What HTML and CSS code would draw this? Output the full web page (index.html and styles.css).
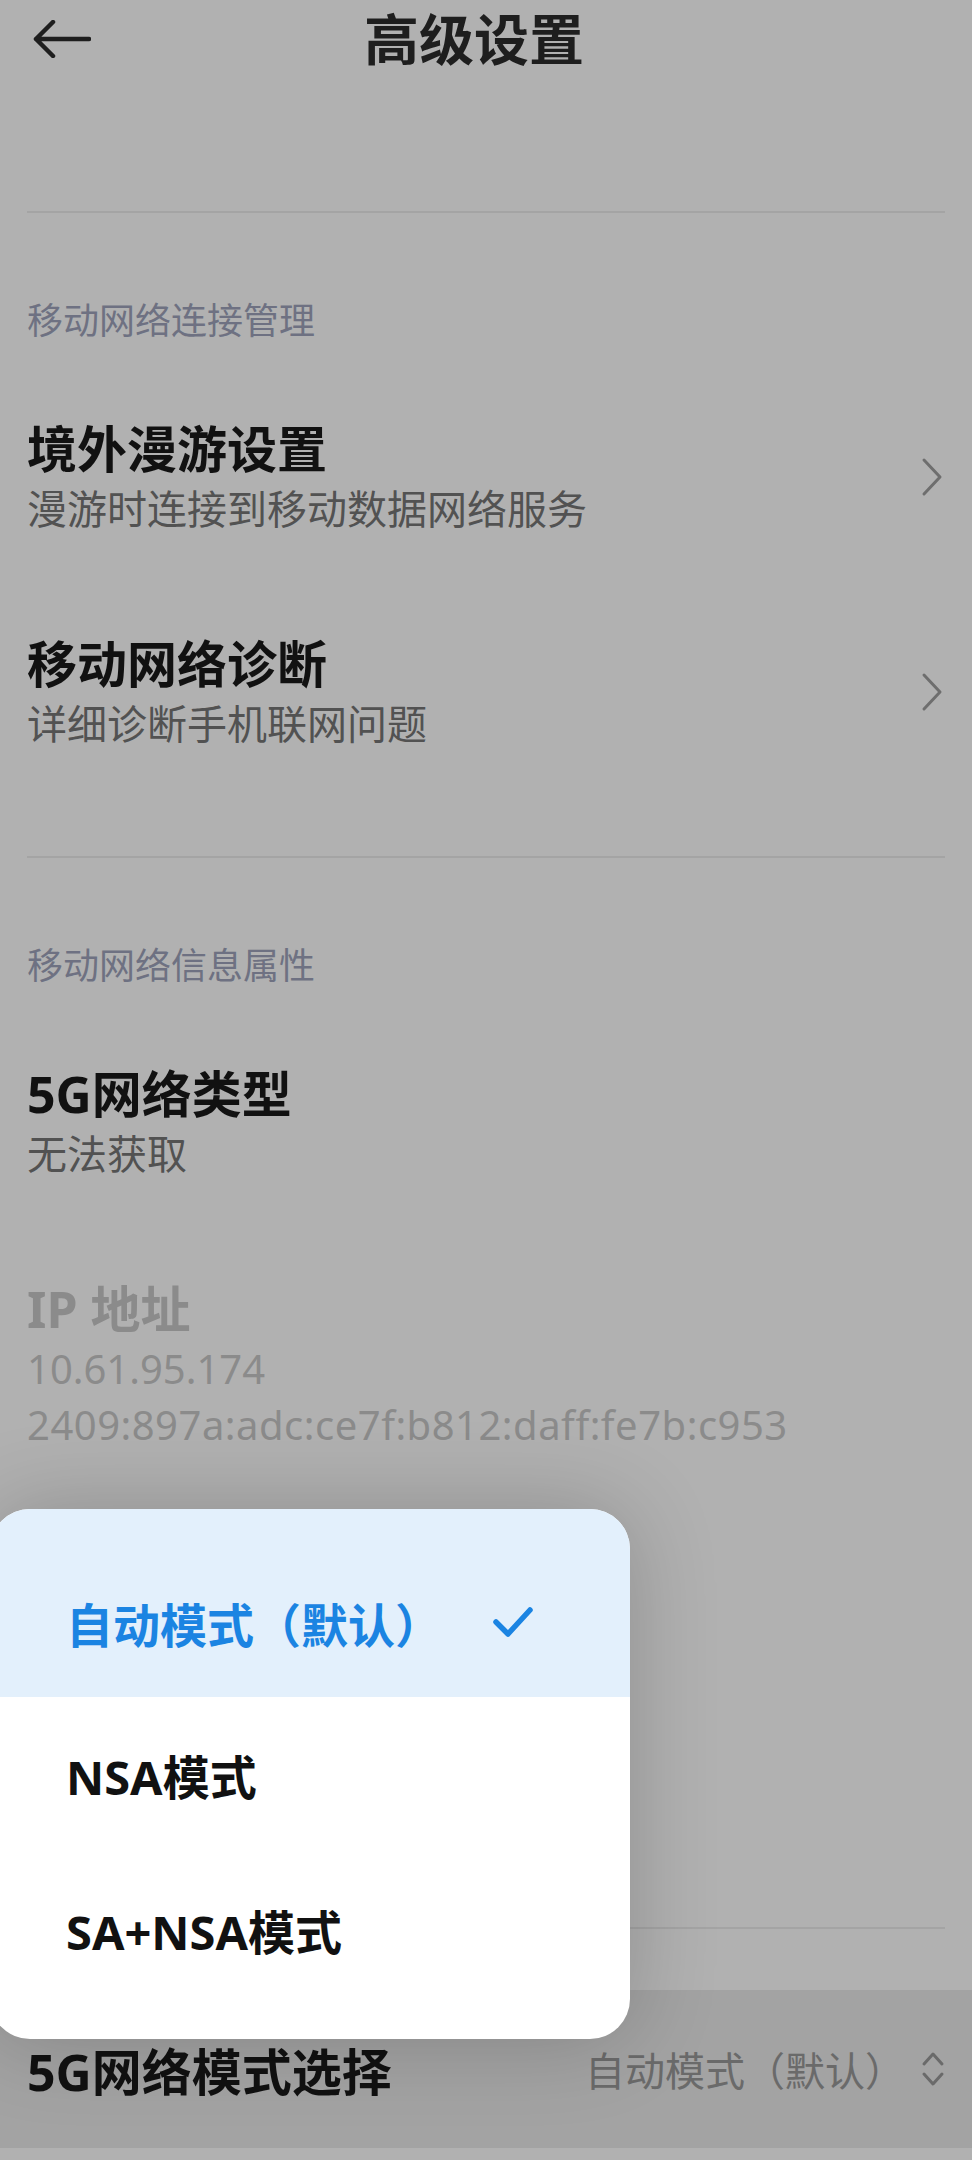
FILE: index.html
```html
<!DOCTYPE html>
<html lang="zh-CN">
<head>
    <meta charset="UTF-8">
    <meta name="viewport" content="width=device-width, initial-scale=1.0">
    <title>高级设置</title>
    <link rel="stylesheet" href="styles.css">
</head>
<body>
    <div class="page">
        <header class="title-bar">
            <button class="back-btn" aria-label="返回">
                <svg width="58" height="38" viewBox="0 0 58 38">
                    <path d="M20 2 L3 19 L20 36 M3 19 H56" fill="none" stroke="#1e1e1e" stroke-width="4.5" stroke-linecap="round" stroke-linejoin="round"/>
                </svg>
            </button>
            <h1 class="title">高级设置</h1>
            <div class="title-spacer"></div>
        </header>

        <div class="divider divider-top"></div>

        <section class="group">
            <div class="group-label">移动网络连接管理</div>
            <div class="item">
                <div class="item-text">
                    <div class="item-title">境外漫游设置</div>
                    <div class="item-sub">漫游时连接到移动数据网络服务</div>
                </div>
                <svg class="chevron" width="22" height="40" viewBox="0 0 22 40">
                    <path d="M3 3 L19 20 L3 37" fill="none" stroke="#6e6e6e" stroke-width="3" stroke-linecap="round" stroke-linejoin="round"/>
                </svg>
            </div>
            <div class="item">
                <div class="item-text">
                    <div class="item-title">移动网络诊断</div>
                    <div class="item-sub">详细诊断手机联网问题</div>
                </div>
                <svg class="chevron" width="22" height="40" viewBox="0 0 22 40">
                    <path d="M3 3 L19 20 L3 37" fill="none" stroke="#6e6e6e" stroke-width="3" stroke-linecap="round" stroke-linejoin="round"/>
                </svg>
            </div>
        </section>

        <div class="divider divider-mid"></div>

        <section class="group">
            <div class="group-label">移动网络信息属性</div>
            <div class="item">
                <div class="item-text">
                    <div class="item-title">5G网络类型</div>
                    <div class="item-sub">无法获取</div>
                </div>
            </div>
            <div class="item disabled">
                <div class="item-text">
                    <div class="item-title">IP 地址</div>
                    <div class="item-sub">10.61.95.174</div>
                    <div class="item-sub ip-v6">2409:897a:adc:ce7f:b812:daff:fe7b:c953</div>
                </div>
            </div>
        </section>

        <div class="divider divider-low"></div>

        <div class="select-row">
            <div class="select-title">5G网络模式选择</div>
            <div class="select-value">自动模式（默认）</div>
            <svg class="updown" width="24" height="38" viewBox="0 0 24 38">
                <path d="M3 14 L12 4 L21 14 M3 24 L12 34 L21 24" fill="none" stroke="#6a6a6a" stroke-width="3" stroke-linecap="round" stroke-linejoin="round"/>
            </svg>
        </div>

        <!-- 下拉选择弹层 -->
        <div class="popup">
            <div class="menu-item selected">
                <span>自动模式（默认）</span>
                <svg class="check" width="42" height="32" viewBox="0 0 42 32">
                    <path d="M4 16 L16 28 L38 4" fill="none" stroke="#1b84e2" stroke-width="5.5" stroke-linecap="round" stroke-linejoin="round"/>
                </svg>
            </div>
            <div class="menu-item">NSA模式</div>
            <div class="menu-item">SA+NSA模式</div>
        </div>
    </div>
</body>
</html>
```

FILE: styles.css
```css
* {
    margin: 0;
    padding: 0;
    box-sizing: border-box;
}

body {
    font-family: "Noto Sans", "Noto Sans CJK SC", sans-serif;
    background: #b1b1b1;
    width: 972px;
    height: 2160px;
    overflow: hidden;
}

.page {
    position: relative;
    width: 100%;
    height: 100%;
}

/* 标题栏 */
.title-bar {
    height: 78px;
    display: flex;
    align-items: center;
}

.back-btn {
    margin-left: 33px;
    width: 58px;
    height: 38px;
    border: none;
    background: none;
    display: flex;
}

.title {
    flex: 1;
    text-align: center;
    font-size: 55px;
    font-weight: 700;
    color: #1e1e1e;
    line-height: 78px;
}

.title-spacer {
    width: 115px;
}

/* 分割线 */
.divider {
    height: 2px;
    margin: 0 27px;
    background: #a4a4a4;
}

.divider-top {
    margin-top: 133px;
}

.divider-mid {
    margin-top: 56px;
}

.divider-low {
    margin-top: 426px;
}

/* 分组 */
.group {
    padding: 0 27px;
}

.group-label {
    padding-top: 84px;
    margin-bottom: 25px;
    font-size: 36px;
    line-height: 48px;
    color: #6e7182;
}

.item {
    display: flex;
    align-items: center;
    padding: 47px 0 48px;
}

.item-text {
    flex: 1;
}

.item-title {
    font-size: 50px;
    font-weight: 700;
    line-height: 64px;
    color: #111111;
}

.item-sub {
    font-size: 40px;
    line-height: 56px;
    color: #525252;
}

.item-sub.ip-v6 {
    letter-spacing: 0.5px;
}

.item.disabled .item-title,
.item.disabled .item-sub {
    color: #8b8b8b;
}

.chevron {
    margin-right: 2px;
}

/* 底部选择行（按下状态） */
.select-row {
    margin-top: 61px;
    height: 158px;
    display: flex;
    align-items: center;
    padding: 0 27px;
    background: rgba(0, 0, 0, 0.08);
}

.select-title {
    flex: 1;
    font-size: 50px;
    font-weight: 700;
    color: #111111;
}

.select-value {
    font-size: 40px;
    color: #6a6a6a;
}

.updown {
    margin-left: 16px;
}

/* 弹出菜单 */
.popup {
    position: absolute;
    left: -10px;
    top: 1509px;
    width: 640px;
    height: 530px;
    background: #ffffff;
    border-radius: 40px;
    overflow: hidden;
    box-shadow: 0 0 90px rgba(0, 0, 0, 0.2);
}

.menu-item {
    height: 155px;
    display: flex;
    align-items: center;
    padding-left: 76px;
    font-size: 47px;
    font-weight: 700;
    color: #111111;
}

.menu-item.selected {
    height: 188px;
    padding-top: 38px;
    background: #e3f0fc;
    color: #1b84e2;
}

.check {
    margin-left: 50px;
}
```
